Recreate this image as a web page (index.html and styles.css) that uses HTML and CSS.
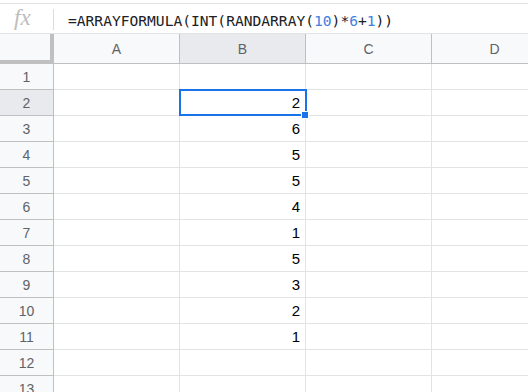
FILE: index.html
```html
<!DOCTYPE html>
<html lang="en">
<head>
	<meta charset="UTF-8">
	<title>Sheet - RANDARRAY</title>
	<link rel="stylesheet" href="styles.css">
</head>
<body>
	<div id="formulaBar">
		<span class="fx">fx</span>
		<span class="sep"></span>
		<span class="formula">=ARRAYFORMULA(INT(RANDARRAY(<span class="num">10</span>)*<span class="num">6</span>+<span class="num">1</span>))</span>
	</div>

	<div id="viewport">
		<div id="sheet">
			<!-- column headers -->
			<div class="corner"></div>
			<div class="colHead">A</div>
			<div class="colHead active">B</div>
			<div class="colHead">C</div>
			<div class="colHead">D</div>

			<div class="rowHead">1</div><div class="cell"></div><div class="cell"></div><div class="cell"></div><div class="cell"></div>
			<div class="rowHead active">2</div><div class="cell"></div><div class="cell value selected">2<span class="selBox"></span><span class="handle"></span></div><div class="cell"></div><div class="cell"></div>
			<div class="rowHead">3</div><div class="cell"></div><div class="cell value">6</div><div class="cell"></div><div class="cell"></div>
			<div class="rowHead">4</div><div class="cell"></div><div class="cell value">5</div><div class="cell"></div><div class="cell"></div>
			<div class="rowHead">5</div><div class="cell"></div><div class="cell value">5</div><div class="cell"></div><div class="cell"></div>
			<div class="rowHead">6</div><div class="cell"></div><div class="cell value">4</div><div class="cell"></div><div class="cell"></div>
			<div class="rowHead">7</div><div class="cell"></div><div class="cell value">1</div><div class="cell"></div><div class="cell"></div>
			<div class="rowHead">8</div><div class="cell"></div><div class="cell value">5</div><div class="cell"></div><div class="cell"></div>
			<div class="rowHead">9</div><div class="cell"></div><div class="cell value">3</div><div class="cell"></div><div class="cell"></div>
			<div class="rowHead">10</div><div class="cell"></div><div class="cell value">2</div><div class="cell"></div><div class="cell"></div>
			<div class="rowHead">11</div><div class="cell"></div><div class="cell value">1</div><div class="cell"></div><div class="cell"></div>
			<div class="rowHead">12</div><div class="cell"></div><div class="cell"></div><div class="cell"></div><div class="cell"></div>
			<div class="rowHead">13</div><div class="cell"></div><div class="cell"></div><div class="cell"></div><div class="cell"></div>
		</div>
	</div>
</body>
</html>
```

FILE: styles.css
```css
html, body {
	margin: 0;
	padding: 0;
	background-color: #fff;
	overflow: hidden;
	font-family: "Liberation Sans", Arial, sans-serif;
}
#formulaBar {
	margin-top: 3px;
	height: 31px;
	border-top: 1px solid #e3e3e3;
	border-bottom: 1px solid #e3e3e3;
	display: flex;
	align-items: center;
	box-sizing: border-box;
}
#formulaBar .fx {
	width: 53px;
	box-sizing: border-box;
	padding-left: 14px;
	font-family: "Liberation Serif", serif;
	font-style: italic;
	font-size: 23px;
	color: #bdbdbd;
	line-height: 1;
	margin-top: -2px;
}
#formulaBar .sep {
	width: 1px;
	height: 21px;
	background-color: #dadce0;
	margin-top: 2px;
}
#formulaBar .formula {
	padding-left: 14px;
	font-family: "DejaVu Sans Mono", monospace;
	font-size: 14.6px;
	color: #202124;
	margin-top: 3px;
	white-space: nowrap;
}
#formulaBar .num {
	color: #3f7fe0;
}
#viewport {
	width: 100%;
	overflow: hidden;
}
#sheet {
	display: grid;
	grid-template-columns: 54px 126px 126px 126px 126px;
	grid-template-rows: 30px;
	grid-auto-rows: 26px;
	width: 558px;
}
#sheet > div {
	box-sizing: border-box;
	display: flex;
	align-items: center;
}
.corner {
	background-color: #f8f9fa;
	border-right: 4px solid #c0c0c0;
	border-bottom: 4px solid #c0c0c0;
}
.colHead,
.rowHead {
	background-color: #f8f9fa;
	border-right: 1px solid #c0c0c0;
	border-bottom: 1px solid #c0c0c0;
	justify-content: center;
	color: #5f6368;
	font-size: 14px;
}
.colHead.active, .rowHead.active {
	background-color: #e8eaed;
}
.cell {
	border-right: 1px solid #e2e3e3;
	border-bottom: 1px solid #e2e3e3;
}
.cell.value {
	justify-content: flex-end;
	padding-right: 5px;
	font-size: 15px;
	color: #000;
}
.cell.selected {
	position: relative;
}
.selBox {
	position: absolute;
	left: -1px;
	top: -1px;
	width: 128px;
	height: 27px;
	box-sizing: border-box;
	border: 2px solid #1a73e8;
}
.handle {
	position: absolute;
	right: -4px;
	bottom: -4px;
	width: 8px;
	height: 8px;
	box-sizing: border-box;
	background-color: #1a73e8;
	border: 1px solid #fff;
}
```
